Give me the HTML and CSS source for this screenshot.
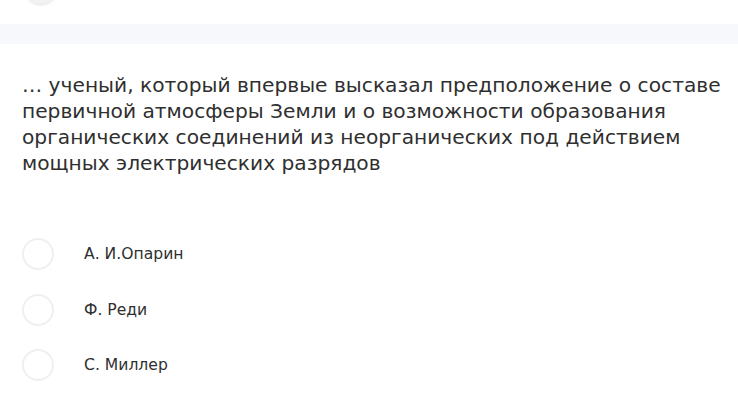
FILE: index.html
```html
<!DOCTYPE html>
<html lang="ru">
<head>
<meta charset="utf-8">
<link rel="stylesheet" href="styles.css">
</head>
<body>
<div class="top">
  <div class="top-btn"></div>
</div>
<div class="band"></div>
<div class="question">
  <p class="q-text">… ученый, который впервые высказал предположение о составе первичной атмосферы Земли и о возможности образования органических соединений из неорганических под действием мощных электрических разрядов</p>
  <ul class="options">
    <li class="option"><span class="radio"></span><span class="label">А. И.Опарин</span></li>
    <li class="option"><span class="radio"></span><span class="label">Ф. Реди</span></li>
    <li class="option"><span class="radio"></span><span class="label">С. Миллер</span></li>
  </ul>
</div>
</body>
</html>
```
FILE: styles.css
```css
* { box-sizing: border-box; }
html, body { margin: 0; padding: 0; background: #fff; }
body {
  width: 738px;
  height: 409px;
  overflow: hidden;
  font-family: "DejaVu Sans", sans-serif;
  color: #2f2f2f;
}
.top {
  height: 24px;
  position: relative;
  overflow: hidden;
}
.top-btn {
  position: absolute;
  left: 25px;
  top: -28px;
  width: 32px;
  height: 32px;
  border-radius: 50%;
  background: #f2f2f2;
  box-shadow: 0 1px 3px rgba(0,0,0,0.12);
}
.band {
  height: 20px;
  background: #f7f8fb;
}
.question {
  padding: 28px 8px 0 22px;
}
.q-text {
  margin: 0;
  font-size: 20.2px;
  line-height: 26px;
}
.options {
  list-style: none;
  margin: 62px 0 0 0;
  padding: 0;
  display: flex;
  flex-direction: column;
  gap: 23.5px;
}
.option {
  display: flex;
  align-items: center;
  height: 32px;
}
.radio {
  width: 32px;
  height: 32px;
  border-radius: 50%;
  border: 2px solid #efefef;
  flex: none;
}
.label {
  margin-left: 30px;
  font-size: 15.6px;
}
```
